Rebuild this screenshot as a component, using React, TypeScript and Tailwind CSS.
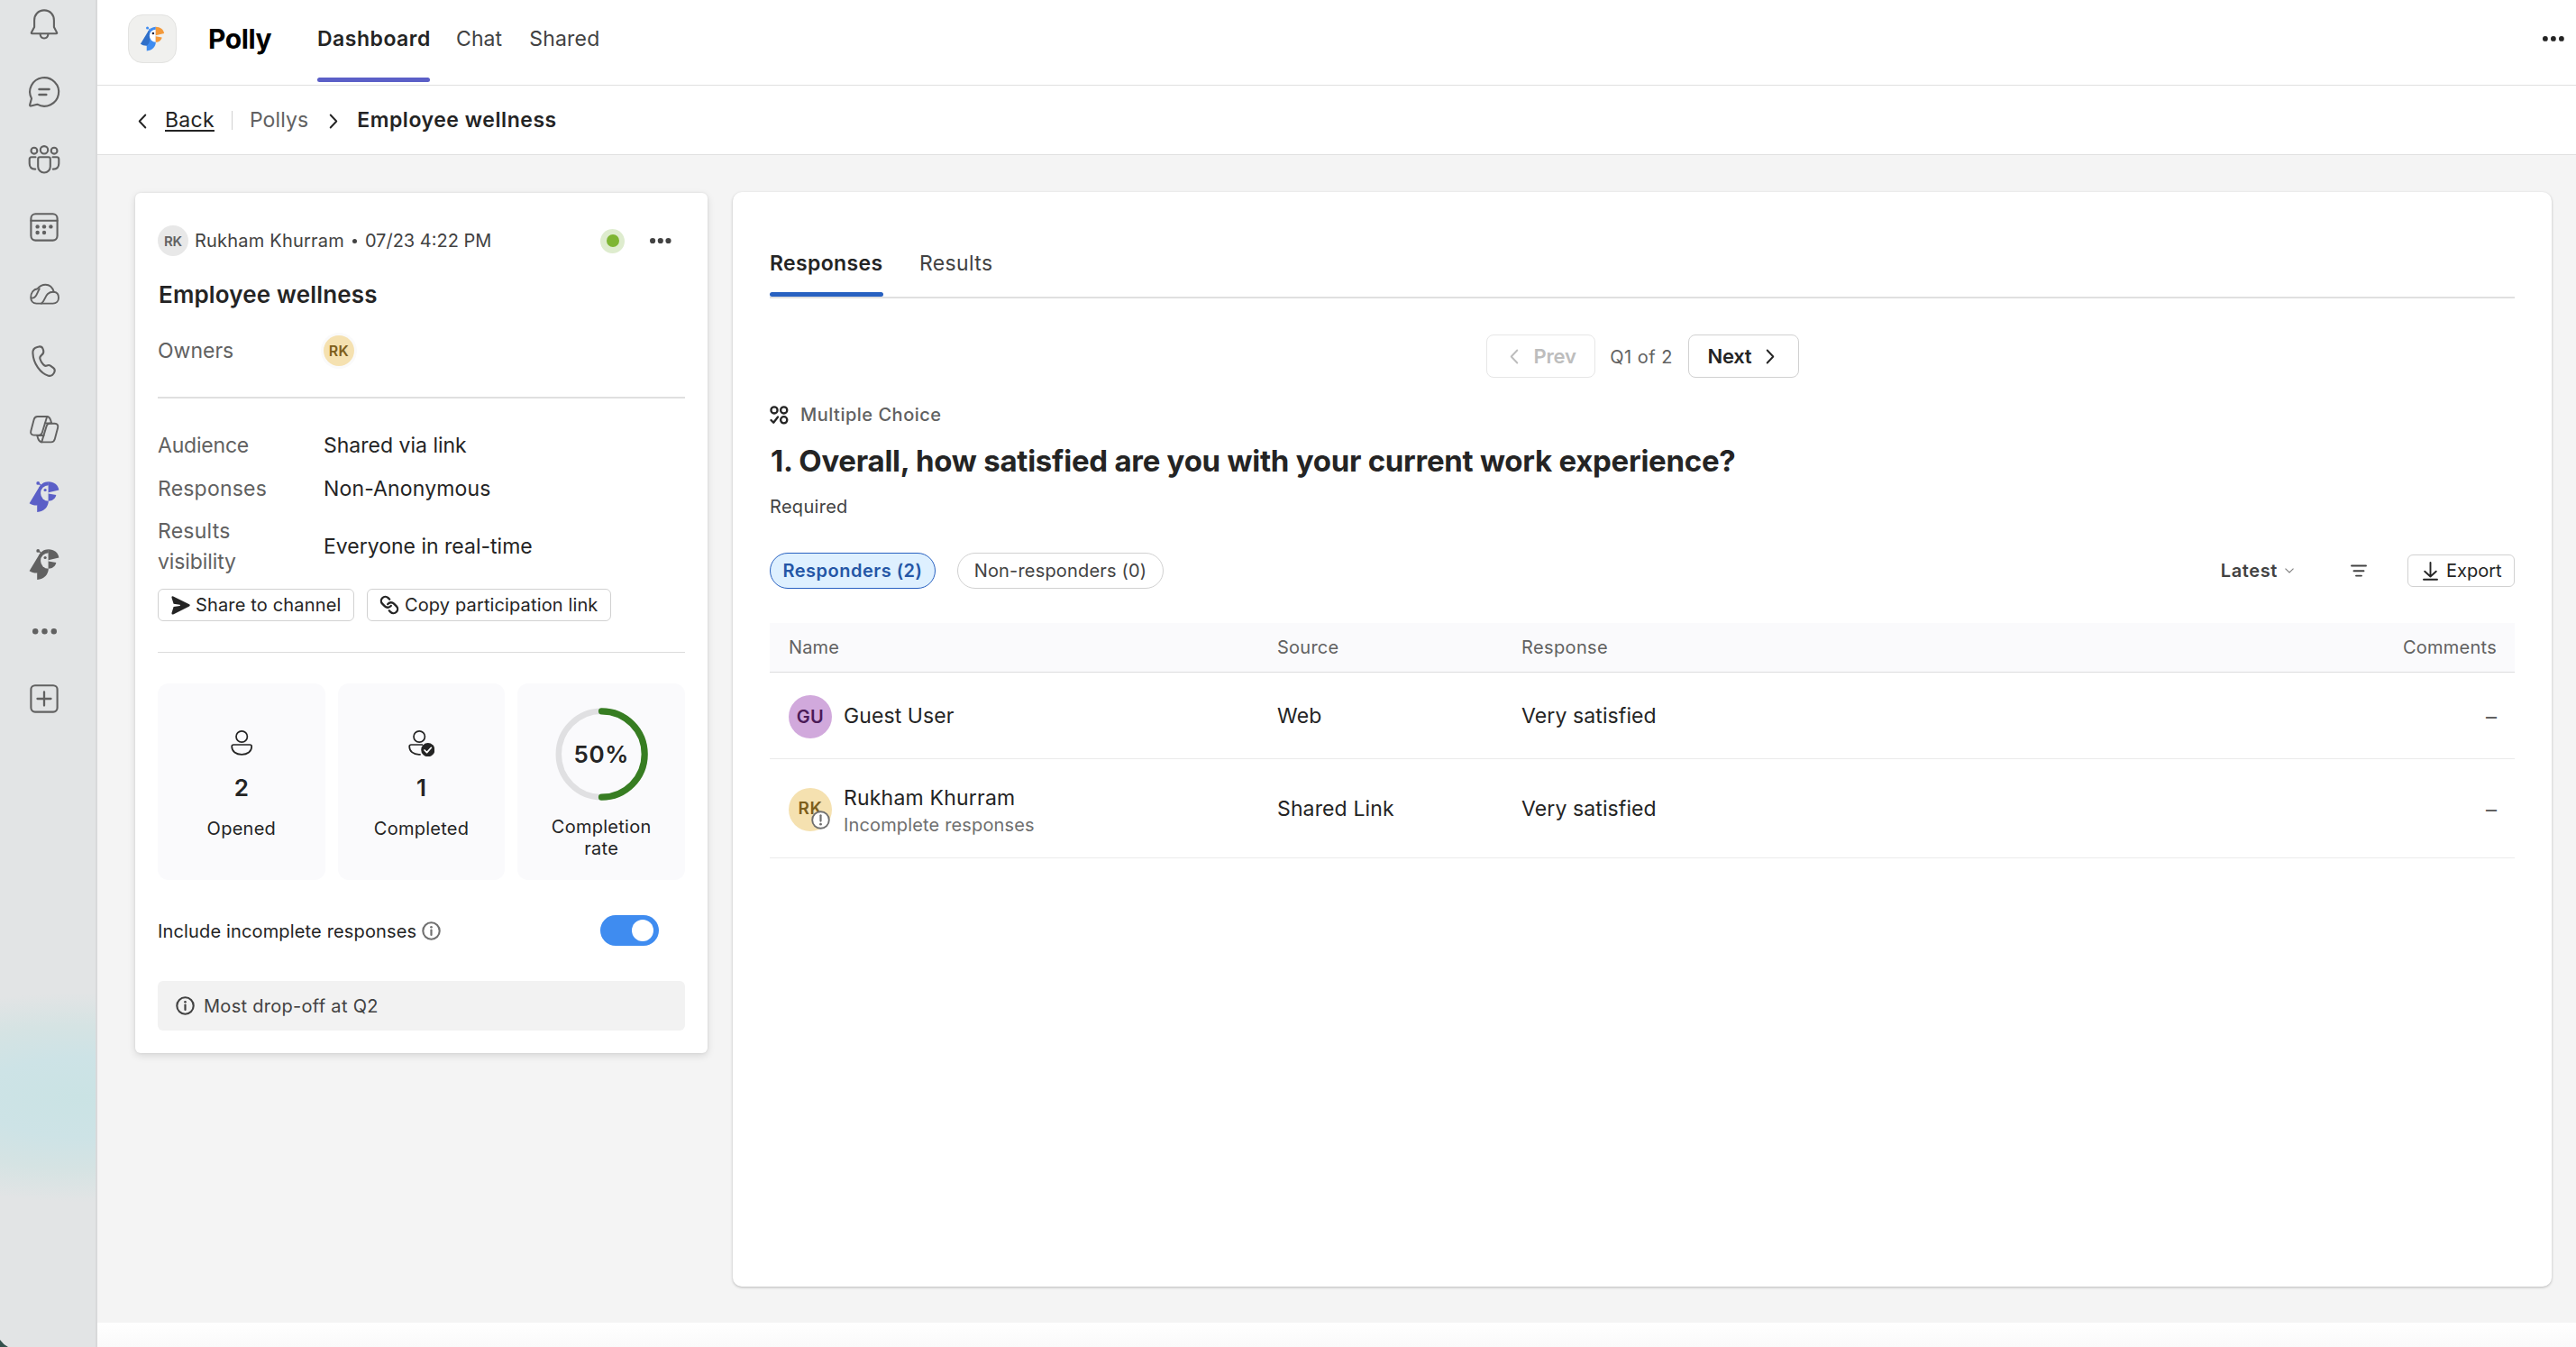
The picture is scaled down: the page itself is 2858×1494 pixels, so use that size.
import React, { ReactNode } from "react";
import { Link } from "lucide-react";

const Glyph = ({ children, size = 40 }: { children: ReactNode; size?: number }) => (
  <svg
    width={size}
    height={size}
    viewBox="0 0 40 40"
    fill="none"
    stroke="currentColor"
    strokeWidth="2.1"
    strokeLinecap="round"
    strokeLinejoin="round"
  >
    {children}
  </svg>
);

const BellIcon = () => (
  <Glyph>
    <path d="M20 4.4C13.2 4.4 9.1 9.6 9.1 15.4V23L5.9 29.1c-.4.8 0 1.2.7 1.2H33.4c.7 0 1.1-.4.7-1.2L30.9 23V15.4C30.9 9.6 26.8 4.4 20 4.4Z" />
    <path d="M15.6 30.8C15.8 33.8 17.5 35.5 20 35.5s4.2-1.7 4.4-4.7" />
  </Glyph>
);

const ChatIcon = () => (
  <Glyph>
    <path d="M12.3 33.7 5.3 35.4c-.9.2-1.4-.3-1.2-1.2L6 27.3A16 15.8 0 1 1 12.3 33.7Z" />
    <path strokeWidth="2.5" d="M14.5 17H25.5M14.5 22.9H22.3" />
  </Glyph>
);

const PeopleIcon = () => (
  <Glyph>
    <circle cx="20" cy="9.3" r="4.2" />
    <circle cx="8.9" cy="10.2" r="3.4" />
    <circle cx="31.1" cy="10.2" r="3.4" />
    <path d="M13.2 19.3q0-2 2-2h9.6q2 0 2 2v8.4a6.8 6.8 0 0 1-13.6 0z" />
    <path d="M10.5 17.3H6q-2.3 0-2.3 2.3v4.7q0 6.3 6.5 6.3" />
    <path d="M29.5 17.3H34q2.3 0 2.3 2.3v4.7q0 6.3-6.5 6.3" />
  </Glyph>
);

const CalendarIcon = () => (
  <Glyph>
    <rect x="5.4" y="5.2" width="29.2" height="29.4" rx="5" />
    <path d="M5.4 12.7H34.6" />
    <g fill="currentColor" stroke="none">
      <circle cx="12.6" cy="19.4" r="2.2" />
      <circle cx="20" cy="19.4" r="2.2" />
      <circle cx="27.4" cy="19.4" r="2.2" />
      <circle cx="12.6" cy="26" r="2.2" />
      <circle cx="20" cy="26" r="2.2" />
    </g>
  </Glyph>
);

const CloudIcon = () => (
  <Glyph>
    <g strokeWidth="1.9">
      <path d="M11.5 29.6C7.5 29.6 5.2 26.5 5.2 23c0-5.500 3-9.200 7.500-9.800C15 10.200 18 8.700 21.500 8.700c4.500 0 7.800 3 9.300 8.100 3.500.4 5.200 3.200 5.200 6.400 0 3.700-2.600 6.400-6.200 6.400Z" />
      <path d="M17 29.600C22 26 20.500 16.500 30.800 16.800M6 23.500C11 24.500 12 18 14.800 13.200" />
    </g>
  </Glyph>
);

const PhoneIcon = () => (
  <Glyph>
    <path d="M12.300 3.900C8.700 4.700 7.200 7 7.400 10.600 8 22.500 16 33.200 24.600 35.700c3.600.9 5.400-1 6.700-3.800.9-2 .5-3.600-1-4.800l-3-2.300c-1.400-1-2.800-1-4.300-.3-1.500.8-2.600.4-4-1.200-1.800-2-3-4.300-3.600-6.300-.5-1.700 0-2.700 1.700-4.100 1.900-1.600 2.600-3 2.100-5l-.6-1.900C18 4 16.500 3.200 14.500 3.400Z" />
  </Glyph>
);

const CopilotLeaf = () => (
  <>
    <path d="M12.6 6H23.2L17.8 23.8c-.5 1.700-1.700 2.800-3.500 2.800H8.600c-2.800 0-4-1.900-3.300-4.600L8.600 9.400C9.200 7.200 10.400 6 12.600 6Z" />
    <path d="M23.2 6c2.600.1 3.200 1.800 4 4l1 3.400M20.800 13.400h7" />
  </>
);

const CopilotIcon = () => (
  <Glyph>
    <g strokeWidth="1.9">
      <CopilotLeaf />
      <g transform="rotate(180 20.2 20.2)">
        <CopilotLeaf />
      </g>
    </g>
  </Glyph>
);

const Parrot = ({
  body,
  wing,
  beak,
  face,
  eye,
  size = 40,
}: {
  body: string;
  wing: string;
  beak: string;
  face: string;
  eye: string;
  size?: number;
}) => (
  <svg width={size} height={size} viewBox="0 0 40 40">
    <path d="M14.5 5.5 18 9" stroke={body} strokeWidth="1.2" />
    <circle cx="13.2" cy="4.900" r="1.900" fill={body} />
    <path fill={body} d="M24.8 3.300C19.500 3.500 16.500 5.800 14.500 9.500L12.200 29.500V36.900C20 36.500 24.800 31 24.800 24.500Z" />
    <path fill={wing} d="M15.500 7.500 3.600 27.200C6 29 9 29.700 12.200 29.600 16 27 17.500 22 16 14Z" />
    <path fill={face} d="M24.800 7.200A8.700 8.700 0 0 0 24.800 24.700Z" />
    <circle cx="21.1" cy="12.5" r="1.600" fill={eye} />
    <path fill={beak} d="M24.7 3.300C31 3.300 35.500 7 36.400 12.400L24.700 15.200Z" />
    <path fill={beak} d="M24.7 16.600 33.300 18C32.500 22 29 24.700 24.700 24.700Z" />
  </svg>
);

const AddIcon = () => (
  <Glyph>
    <rect x="5.4" y="5.2" width="29.2" height="29.4" rx="4.5" />
    <path d="M20 12.5V27.5M12.5 20H27.5" strokeWidth="2.3" />
  </Glyph>
);

const Dots = ({ r, step, className }: { r: number; step: number; className: string }) => (
  <svg width={2 * step + 2 * r} height={2 * r} className={className} fill="currentColor">
    <circle cx={r} cy={r} r={r} />
    <circle cx={r + step} cy={r} r={r} />
    <circle cx={r + 2 * step} cy={r} r={r} />
  </svg>
);

const Chevron = ({ dir, className }: { dir: "left" | "right"; className: string }) => (
  <svg
    width="10"
    height="17"
    viewBox="0 0 10 17"
    fill="none"
    stroke="currentColor"
    strokeWidth="1.9"
    strokeLinecap="round"
    strokeLinejoin="round"
    className={className}
  >
    <path d={dir === "left" ? "M8.3 1.5 1.7 8.5 8.3 15.5" : "M1.7 1.5 8.3 8.5 1.7 15.5"} />
  </svg>
);

const InfoIcon = ({ className }: { className: string }) => (
  <svg width="21" height="21" viewBox="0 0 21 21" fill="none" stroke="currentColor" className={className}>
    <circle cx="10.5" cy="10.5" r="9.200" strokeWidth="2.1" />
    <path d="M10.5 9.500V15" strokeWidth="2.2" strokeLinecap="round" />
    <circle cx="10.5" cy="6.300" r="1.300" fill="currentColor" stroke="none" />
  </svg>
);

const SendIcon = () => (
  <svg width="21" height="21" viewBox="0 0 21 21" fill="currentColor" className="shrink-0">
    <path d="M2.2.5 20 9.300q1.500 1 0 2.100L2.200 20.400Q.2 21 .5 18.800L2.600 12 9.500 11q.9-.6 0-1.200L2.600 8.800.5 2Q.2-.2 2.200.5Z" />
  </svg>
);

const ChoiceIcon = () => (
  <svg width="21" height="21" viewBox="0 0 21 21" fill="none" stroke="currentColor" strokeWidth="2.3">
    <circle cx="5" cy="4.9" r="3.6" />
    <circle cx="15.7" cy="4.9" r="3.6" />
    <circle cx="15.7" cy="15.8" r="3.6" />
    <path d="M1.5 16 4.2 18.7 9 12.5" strokeLinecap="round" strokeLinejoin="round" />
  </svg>
);

const PersonIcon = ({ done = false }: { done?: boolean }) => (
  <svg width="30" height="30" viewBox="0 0 30 30" fill="none" stroke="#242424" strokeWidth="1.7">
    {done ? (
      <>
        <circle cx="13.2" cy="8" r="6.2" />
        <path d="M17 17H4.200q-2 0-2 2c0 5.500 4.500 8.800 10.500 8.800h2" />
        <circle cx="22.8" cy="22.7" r="7.6" fill="#242424" stroke="none" />
        <path d="M19 23l2.600 2.600 4.800-5.300" stroke="#fff" strokeLinecap="round" strokeLinejoin="round" />
      </>
    ) : (
      <>
        <circle cx="15.2" cy="8" r="6.2" />
        <path d="M6.2 17H24.2q2 0 2 2C26.2 24.5 21.5 27.8 15.2 27.8S4.2 24.5 4.2 19q0-2 2-2Z" />
      </>
    )}
  </svg>
);

const Detail = ({ label, value, track }: { label: ReactNode; value: string; track: string }) => (
  <div className="flex items-center">
    <div className="w-[184px] text-[#616161]">{label}</div>
    <div className={track}>{value}</div>
  </div>
);

const StatCard = ({ icon, value, label }: { icon: ReactNode; value: string; label: string }) => (
  <div className="flex flex-col items-center rounded-xl bg-[#fafafc] pt-[51px]">
    {icon}
    <div className="mt-[17px] text-[26px] leading-[35px] font-semibold">{value}</div>
    <div className="mt-4 text-xl leading-6 tracking-[0.25px]">{label}</div>
  </div>
);

const navIcons: ReactNode[] = [
  <BellIcon />,
  <ChatIcon />,
  <PeopleIcon />,
  <CalendarIcon />,
  <CloudIcon />,
  <PhoneIcon />,
  <CopilotIcon />,
  <Parrot body="#5b5fc7" wing="#5b5fc7" beak="#5b5fc7" face="#e2e4e5" eye="#5b5fc7" />,
  <Parrot body="#616161" wing="#616161" beak="#616161" face="#e2e4e5" eye="#616161" />,
  <Dots r={3.2} step={10.3} className="" />,
  <AddIcon />,
];

const rowGrid = "grid grid-cols-[542px_271px_1fr_auto] items-center border-b pr-5 pl-[21px]";

export default function App() {
  return (
    <div className="relative flex h-[1494px] w-[2858px] overflow-hidden bg-white font-['Inter',sans-serif] text-[#242424]">
      <nav className="w-[108px] shrink-0 border-r-2 border-[#d8d9da] bg-[#e2e4e5] bg-[radial-gradient(ellipse_300px_116px_at_90px_1217px,#cae3e4_0%,#cde3e6_38%,#d5e3e3_68%,#e2e4e5_100%)] text-[#616161]">
        <div className="-mt-[10px] flex w-[98px] flex-col">
          {navIcons.map((icon, i) => (
            <div key={i} className="flex h-[74.8px] items-center justify-center">
              {icon}
            </div>
          ))}
        </div>
      </nav>

      <div className="flex flex-1 flex-col">
        <header className="flex h-[95px] border-b border-[#e0e0e0] pr-[13px] pl-[34px]">
          <div className="flex h-[86px] items-center">
            <div className="flex size-[54px] items-center justify-center rounded-2xl border border-[#e3e3e1] bg-[#f0f0ee]">
              <Parrot body="#3f8cf0" wing="#2f6fc9" beak="#f3993a" face="#ffffff" eye="#1f1f3a" size={32} />
            </div>
            <div className="ml-[35px] w-[121px] pt-px text-[30px] font-bold tracking-[-0.4px] text-black">Polly</div>
          </div>
          <div className="flex text-[23px]">
            <div className="w-[125px]">
              <div className="flex h-[86px] items-center pt-px font-semibold tracking-[0.5px]">Dashboard</div>
              <div className="h-[5px] rounded-full bg-[#5b5fc7]" />
            </div>
            <div className="ml-[29px] flex h-[86px] items-center pt-px tracking-[0.1px] text-[#424242]">Chat</div>
            <div className="ml-[30px] flex h-[86px] items-center pt-px tracking-[0.2px] text-[#424242]">Shared</div>
          </div>
          <div className="ml-auto flex h-[86px] items-center">
            <Dots r={2.9} step={9} className="text-[#242424]" />
          </div>
        </header>

        <div className="flex h-[77px] items-center border-b border-[#e0e0e0] pt-px pl-[45px] text-[23px]">
          <Chevron dir="left" className="mt-px" />
          <span className="ml-[20px] tracking-[0.3px] underline decoration-2 underline-offset-[3px]">Back</span>
          <span className="ml-[19px] h-[21px] w-px bg-[#d1d1d1]" />
          <span className="ml-[19px] tracking-[0.1px] text-[#616161]">Pollys</span>
          <Chevron dir="right" className="mt-px ml-[23px]" />
          <span className="ml-[21px] font-semibold tracking-[0.55px]">Employee wellness</span>
        </div>

        <main className="flex h-[1295px] items-start bg-[#f4f4f4] pl-[42px]">
          <section className="mt-[42px] h-[954px] w-[635px] rounded-md bg-white px-[25px] pt-9 shadow-[0_3px_8px_rgba(0,0,0,0.12),0_0_3px_rgba(0,0,0,0.08)]">
            <div className="flex h-[34px] items-center text-xl text-[#424242]">
              <div className="flex size-[34px] items-center justify-center rounded-full bg-[#e8e8e8] text-[15px] font-semibold tracking-[-0.2px] text-[#616161]">
                RK
              </div>
              <span className="ml-[7px] tracking-[0.2px]">Rukham Khurram</span>
              <span className="ml-[9px] size-[5px] rounded-full bg-[#424242]" />
              <span className="ml-[9px]">07/23 4:22 PM</span>
              <div className="mr-[28px] ml-auto flex size-[27px] items-center justify-center rounded-full bg-[#deecce]">
                <div className="size-[14px] rounded-full bg-[#7eb533]" />
              </div>
              <Dots r={3.1} step={8.7} className="mr-[15px] text-[#424242]" />
            </div>
            <h2 className="mt-[25px] pl-px text-[26px] leading-9 font-semibold tracking-[0.16px]">Employee wellness</h2>
            <div className="mt-[27px] flex h-[34px] items-center text-[23px]">
              <div className="w-[184px] pt-px text-[#616161]">Owners</div>
              <div className="flex size-[34px] items-center justify-center rounded-full bg-[#f5e1b0] text-[16px] font-semibold tracking-[0.5px] text-[#7d5e1a] ring-3 ring-[#fafafa]">
                RK
              </div>
            </div>
            <div className="mt-[34px] h-[2px] bg-[#e0e0e0]" />
            <div className="mt-[35px] flex flex-col gap-[13.5px] text-[23px] leading-[34px]">
              <Detail label={<span className="tracking-[-0.2px]">Audience</span>} value="Shared via link" track="" />
              <Detail label={<span className="tracking-[0.2px]">Responses</span>} value="Non-Anonymous" track="tracking-[0.14px]" />
              <Detail
                label={
                  <>
                    <div className="tracking-[0.25px]">Results</div>
                    <div className="tracking-[-0.1px]">visibility</div>
                  </>
                }
                value="Everyone in real-time"
                track=""
              />
            </div>
            <div className="mt-[13px] flex gap-[14px] text-xl">
              <button className="flex h-9 w-[218px] items-center rounded-md border border-[#d1d1d1] pl-[14px] whitespace-nowrap">
                <SendIcon />
                <span className="ml-[6px] tracking-[0.16px]">Share to channel</span>
              </button>
              <button className="flex h-9 w-[271px] items-center rounded-md border border-[#d1d1d1] pl-[13px] whitespace-nowrap">
                <Link size={22} strokeWidth={2.5} className="-scale-x-100" />
                <span className="ml-[6px] tracking-[0.13px]">Copy participation link</span>
              </button>
            </div>
            <div className="mt-[34px] h-px bg-[#dcdcdc]" />
            <div className="mt-[34px] grid h-[218px] grid-cols-3 gap-[14px]">
              <StatCard icon={<PersonIcon />} value="2" label="Opened" />
              <StatCard icon={<PersonIcon done />} value="1" label="Completed" />
              <div className="flex flex-col items-center rounded-xl bg-[#fafafc] pt-[27px]">
                <div className="relative flex size-[103px] items-center justify-center">
                  <svg width="103" height="103" viewBox="0 0 103 103" fill="none" className="absolute inset-0">
                    <circle cx="51.5" cy="51.5" r="47.7" stroke="#e0e0e2" strokeWidth="6.5" />
                    <path
                      d="M51.5 3.8A47.7 47.7 0 0 1 51.5 99.2"
                      stroke="#377d22"
                      strokeWidth="7.2"
                      strokeLinecap="round"
                    />
                  </svg>
                  <span className="relative text-[26px] font-semibold tracking-[0.6px]">50%</span>
                </div>
                <div className="mt-[17px] text-center text-xl leading-6 tracking-[0.26px]">
                  Completion
                  <br />
                  rate
                </div>
              </div>
            </div>
            <div className="mt-[39px] flex h-[34px] items-center text-xl">
              <span className="pt-px tracking-[0.15px]">Include incomplete responses</span>
              <InfoIcon className="ml-[6px] text-[#707070]" />
              <div className="mr-[29px] ml-auto flex h-[34px] w-[65px] items-center justify-end rounded-full bg-[#3f8cf0] pr-[6px]">
                <div className="size-6 rounded-full bg-white" />
              </div>
            </div>
            <div className="mt-[39px] flex h-[55px] items-center rounded-md bg-[#f2f2f2] pl-[20px] text-xl text-[#424242]">
              <InfoIcon className="" />
              <span className="ml-[10px] pt-px tracking-[0.29px]">Most drop-off at Q2</span>
            </div>
          </section>

          <section className="mt-[41px] ml-7 h-[1214px] w-[2018px] rounded-[10px] bg-white px-[41px] pt-[62px] shadow-[0_1px_3px_rgba(0,0,0,0.25)]">
            <div className="flex gap-[40px] border-b-2 border-[#e0e0e0] text-[23px] leading-[34px]">
              <div className="w-[126px]">
                <div className="font-semibold tracking-[0.36px]">Responses</div>
                <div className="mt-[15px] h-[5px] rounded-full bg-[#2861c1]" />
              </div>
              <div className="tracking-[0.35px] text-[#424242]">Results</div>
            </div>

            <div className="mt-10 flex h-12 items-center justify-center text-[22px] font-semibold">
              <button className="flex h-12 w-[121px] items-center rounded-lg border border-[#e6e6e6] pl-[25px] text-[#bdbdbd]">
                <Chevron dir="left" className="" />
                <span className="ml-[17px] pt-px tracking-[-0.2px]">Prev</span>
              </button>
              <span className="w-[103px] pt-px text-center text-xl font-normal tracking-[0.49px] text-[#616161]">Q1 of 2</span>
              <button className="flex h-12 w-[123px] items-center rounded-lg border border-[#d1d1d1] pl-[21px]">
                <span className="pt-px tracking-[-0.3px]">Next</span>
                <Chevron dir="right" className="ml-[16px]" />
              </button>
            </div>

            <div className="mt-[29px] flex h-6 items-center text-xl font-medium text-[#616161]">
              <span className="text-[#242424]">
                <ChoiceIcon />
              </span>
              <span className="ml-[13px] tracking-[0.5px]">Multiple Choice</span>
            </div>
            <h1 className="mt-[15px] pl-px text-[33px] leading-[48px] font-bold tracking-[-0.26px]">
              1. Overall, how satisfied are you with your current work experience?
            </h1>
            <div className="mt-[15px] text-xl leading-6 tracking-[0.3px] text-[#424242]">Required</div>

            <div className="mt-[39px] flex h-10 items-center text-xl text-[#424242]">
              <div className="flex h-10 w-[184px] items-center justify-center rounded-full border border-[#2861c1] bg-[#def0ff] font-semibold tracking-[0.49px] text-[#2456a6]">
                Responders (2)
              </div>
              <div className="ml-6 flex h-10 w-[229px] items-center justify-center rounded-full border border-[#d1d1d1] tracking-[0.18px]">
                Non-responders (0)
              </div>
              <span className="ml-auto font-semibold tracking-[0.6px]">Latest</span>
              <svg width="10" height="6" viewBox="0 0 10 6" fill="none" stroke="#808080" strokeWidth="1.2" className="ml-[8px]">
                <path d="M.5.6 5 5 9.5.6" />
              </svg>
              <svg width="18" height="14" viewBox="0 0 18 14" fill="none" stroke="#424242" strokeWidth="1.9" strokeLinecap="round" className="ml-[63px]">
                <path d="M1 1.5H17M3.5 7.2H14.5M6 12.6H12" />
              </svg>
              <button className="ml-[45px] flex h-9 w-[119px] items-center rounded-md border border-[#d1d1d1] pl-[16px] text-[#242424]">
                <svg width="17" height="21" viewBox="0 0 17 21" fill="none" stroke="currentColor" strokeWidth="1.9" strokeLinecap="round" strokeLinejoin="round">
                  <path d="M8.5 1V16.5M2.2 10.7 8.5 16.5 14.8 10.7M1 19.7H16" />
                </svg>
                <span className="ml-[9px]">Export</span>
              </button>
            </div>

            <div className="mt-[38px]">
              <div className={`${rowGrid} h-[55px] border-[#dcdcde] bg-[#fafafc] text-xl text-[#616161]`}>
                <span className="tracking-[0.13px]">Name</span>
                <span className="tracking-[0.25px]">Source</span>
                <span className="tracking-[0.37px]">Response</span>
                <span className="tracking-[0.25px]">Comments</span>
              </div>
              <div className={`${rowGrid} h-[96px] border-[#ebebeb] pt-[2px] text-[23px]`}>
                <div className="flex items-center">
                  <div className="flex size-[48px] items-center justify-center rounded-full bg-[#d1a9dc] text-xl font-semibold tracking-[0.5px] text-[#4b1a58]">
                    GU
                  </div>
                  <span className="ml-[13px] tracking-[0.08px]">Guest User</span>
                </div>
                <span className="tracking-[0.2px]">Web</span>
                <span className="tracking-[0.1px]">Very satisfied</span>
                <span className="text-2xl text-[#616161]">–</span>
              </div>
              <div className={`${rowGrid} h-[110px] border-[#ebebeb] pt-[2px] text-[23px]`}>
                <div className="flex items-center">
                  <div className="relative flex size-[48px] items-center justify-center rounded-full bg-[#f5e1b0] text-[19px] font-semibold tracking-[0.5px] text-[#7d5e1a]">
                    RK
                    <svg width="21" height="21" viewBox="0 0 21 21" className="absolute top-[25px] left-[25px]">
                      <circle cx="10.5" cy="10.5" r="9.300" fill="#fff" stroke="#707070" strokeWidth="1.9" />
                      <path d="M10.5 5.300V11.600" stroke="#707070" strokeWidth="2.2" strokeLinecap="round" />
                      <circle cx="10.5" cy="15.200" r="1.400" fill="#707070" />
                    </svg>
                  </div>
                  <div className="ml-[13px]">
                    <div className="leading-[34px] tracking-[0.2px]">Rukham Khurram</div>
                    <div className="text-xl leading-[26px] tracking-[0.15px] text-[#6e6e6e]">Incomplete responses</div>
                  </div>
                </div>
                <span className="tracking-[0.13px]">Shared Link</span>
                <span className="tracking-[0.1px]">Very satisfied</span>
                <span className="text-2xl text-[#616161]">–</span>
              </div>
            </div>
          </section>
        </main>
        <div className="flex-1 bg-gradient-to-b from-white to-[#fafafa]" />
      </div>

      <svg width="9" height="8" viewBox="0 0 9 8" className="absolute bottom-0 left-0">
        <path d="M0 0Q3.5 5 9 8H0Z" fill="#33504c" />
      </svg>
    </div>
  );
}
